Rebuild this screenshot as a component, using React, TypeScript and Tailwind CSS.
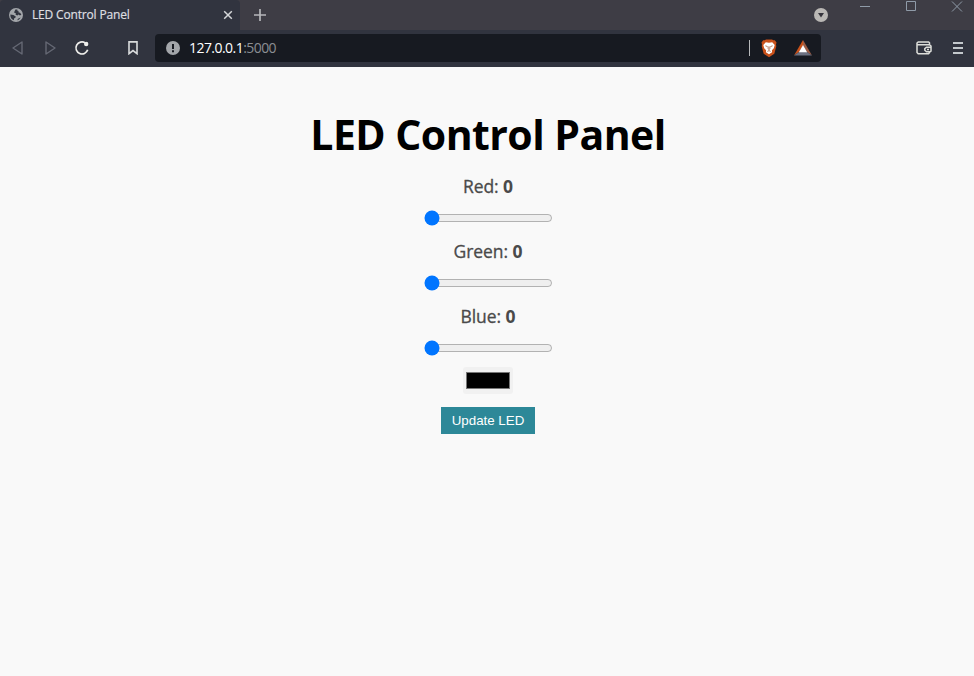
import { useState } from "react";

const uiFont = "font-['Open_Sans','Noto_Sans',sans-serif]";

function GlobeIcon() {
  return (
    <svg width="14" height="14" viewBox="0 0 14 14" className="shrink-0">
      <circle cx="7" cy="7" r="7" fill="#a3a6aa" />
      <path
        d="M1.4 6.6 4.4 7 6.8 8.4 6.4 9.8 5.2 10.3 4.8 12.3C2.2 11.4 1.1 9 1.4 6.6Z M6.4 1.6 8.4 1.5 8.2 2.4 9.6 3 9.4 4.2 11 4.8 12.4 6.6 11 7.4 9.4 6.6 8.4 7.6 6.6 6.8 6.8 5.2 5 4.6 5.6 3.2Z M8.2 12.3 9 10.8 11.6 9.4C11 10.8 9.8 11.9 8.2 12.3Z"
        fill="#31343f"
      />
    </svg>
  );
}

function BraveIcon() {
  return (
    <svg width="16" height="19" viewBox="0 0 16 19" className="shrink-0">
      <path d="M3.8 1.2 5 0.5h6l1.3 0.7 1.5 0 1.7 2.4-.5 1.9.3 1.8-2 7.5L8 18.2l-5.3-3.4L.7 7.3 1 5.5.5 3.6 2.2 1.2Z" fill="#c9511a" />
      <path d="M4.8 3.2 8 3.8l3.2-.6 2.5 2.8-.9 3.2-1.9 2.1.2 1.9L8 15.2l-3.1-2 .2-1.9-1.9-2.1-.9-3.2Z" fill="#fff" />
      <path d="m4.4 6.8 2.2.8M11.6 6.8l-2.2.8M7.3 7.5 7 9.7l1 .8 1-.8-.3-2.2M6.4 12.4l1.6-.8 1.6.8" stroke="#a65a38" strokeWidth=".8" fill="none" />
    </svg>
  );
}

function RewardsIcon() {
  return (
    <svg width="18" height="16" viewBox="0 0 18 16" className="shrink-0">
      <path d="M9 0 0 15.5 5 12 9 5.5Z" fill="#c9511a" />
      <path d="M9 0 18 15.5 13 12 9 5.5Z" fill="#9d5c43" />
      <path d="M0 15.5 5 12h8l5 3.5Z" fill="#6c7080" />
      <path d="M9 5 4.8 12.3h8.4Z" fill="#fff" />
    </svg>
  );
}

function TabStrip() {
  return (
    <div className="flex h-[30px] bg-[#3e3d45]">
      <div className="flex h-[30px] w-60 items-center rounded-t-[4px] bg-[#31343f] pl-[9px]">
        <GlobeIcon />
        <span className="ml-[9px] w-[187px] whitespace-nowrap text-[12px] leading-[30px] tracking-[-0.17px] text-[#dedee0] [-webkit-text-stroke:0.2px]">
          LED Control Panel
        </span>
        <svg width="10" height="10" viewBox="0 0 10 10" className="ml-[4px]">
          <path d="m1.2 1.2 7.6 7.6M8.8 1.2 1.2 8.8" stroke="#d5d7d9" strokeWidth="1.5" />
        </svg>
      </div>
      <svg width="12" height="12" viewBox="0 0 12 12" className="ml-[14px] mt-[9px]">
        <path d="M6 0v12M0 6h12" stroke="#b6b7ba" strokeWidth="1.7" />
      </svg>
      <div className="flex-1" />
      <svg width="14" height="14" viewBox="0 0 14 14" className="mt-2">
        <circle cx="7" cy="7" r="7" fill="#bab8b5" />
        <path d="M4 5h6L7 9.5Z" fill="#35343c" />
      </svg>
      <svg width="107" height="14" viewBox="0 0 107 14" fill="none" stroke="#8f9ba8" className="ml-8 mr-[7px]">
        <path d="M0 6.5h10M46.5 1.5h9v9h-9ZM92 1.5l10 10M102 1.5l-10 10" />
      </svg>
    </div>
  );
}

function Toolbar() {
  return (
    <div className="flex h-[37px] items-center bg-[#31343f] pb-px">
      <svg width="11" height="14" viewBox="0 0 11 14" fill="none" stroke="#656874" strokeWidth="1.4" strokeLinejoin="round" className="ml-[12px]">
        <path d="M10 1v12L1 7Z" />
      </svg>
      <svg width="11" height="14" viewBox="0 0 11 14" fill="none" stroke="#656874" strokeWidth="1.4" strokeLinejoin="round" className="ml-[22px]">
        <path d="M1 1v12l9-6Z" />
      </svg>
      <svg width="16" height="16" viewBox="0 0 16 16" fill="none" className="ml-[18px]">
        <path d="M13.7 9.8A6 6 0 1 1 11.2 2.9" stroke="#eeeeeb" strokeWidth="1.7" />
        <circle cx="12.2" cy="4" r="2.2" fill="#eeeeeb" />
      </svg>
      <svg width="10" height="14" viewBox="0 0 10 14" fill="none" className="ml-[38px]">
        <path d="M1 .9h8v11.8L5 9.6 1 12.7Z" stroke="#d9dbdc" strokeWidth="1.6" />
      </svg>
      <div className="ml-[17px] flex h-7 w-[666px] items-center rounded-[4px] bg-[#171a21] pl-[11px] pr-[9px]">
        <svg width="14" height="14" viewBox="0 0 14 14">
          <circle cx="7" cy="7" r="7" fill="#a3a6aa" />
          <path d="M6 3h2v5H6ZM6 9.3h2v2H6Z" fill="#171a21" />
        </svg>
        <span className="ml-[9px] text-[14px] leading-7 tracking-[-0.55px] text-[#8b8e93]">
          <span className="text-white">127.0.0.1</span>:5000
        </span>
        <div className="flex-1" />
        <div className="mr-[11px] h-4 w-px bg-[#b8babc]" />
        <BraveIcon />
        <div className="w-[17px]" />
        <RewardsIcon />
      </div>
      <div className="flex-1" />
      <svg width="16" height="14" viewBox="0 0 16 14" fill="none" stroke="#dddeda" strokeWidth="1.5">
        <path d="M13.5 4V1.8L12.6 1H2.2L1 2v9.5l1.2 1.2h10.3l1-1V11M1 3.8h12.6L15 5v5.2l-1 .6h-3.5L8.8 9.2V7.6l1.7-1.4H15M11 8.5h2" />
      </svg>
      <svg width="10" height="12" viewBox="0 0 10 12" className="ml-[21px] mr-[11px]">
        <path d="M0 1h10M0 6h10M0 11h10" stroke="#c3c8cc" strokeWidth="1.8" />
      </svg>
    </div>
  );
}

function Channel({ name }: { name: string }) {
  const [value, setValue] = useState(0);
  return (
    <label className="flex h-[65px] flex-col items-center">
      <span className="h-9 whitespace-nowrap text-[17.5px] leading-6 tracking-[-0.08px] text-[#4a4a4a]">
        <span className="[-webkit-text-stroke:0.3px]">{name}:</span>{" "}
        <b className="font-bold">{value}</b>
      </span>
      <input
        type="range"
        min={0}
        max={255}
        value={value}
        onChange={(e) => setValue(Number(e.target.value))}
        className="ml-px h-4 w-[129px]"
      />
    </label>
  );
}

export default function App() {
  return (
    <div className={`flex h-[676px] w-[974px] flex-col overflow-hidden bg-[#f9f9f9] ${uiFont}`}>
      <TabStrip />
      <Toolbar />
      <main className="flex flex-1 flex-col items-center pl-[2px] pt-[38px]">
        <h1 className="mb-[11px] h-[58px] whitespace-nowrap text-[41px] font-bold leading-[58px] tracking-[-0.55px] text-black">
          LED Control Panel
        </h1>
        <Channel name="Red" />
        <Channel name="Green" />
        <Channel name="Blue" />
        <button aria-label="Color" className="-mt-[2px] flex h-[27px] w-[50px] items-center justify-center rounded-[3px] bg-[#f1f1f1]">
          <span className="h-[17px] w-11 border border-[#777] bg-black" />
        </button>
        <button className="mt-[13px] h-[27px] w-[94px] whitespace-nowrap bg-[#2d8898] font-['Liberation_Sans',Arial,sans-serif] text-[13.333px] text-white">
          Update LED
        </button>
      </main>
    </div>
  );
}
